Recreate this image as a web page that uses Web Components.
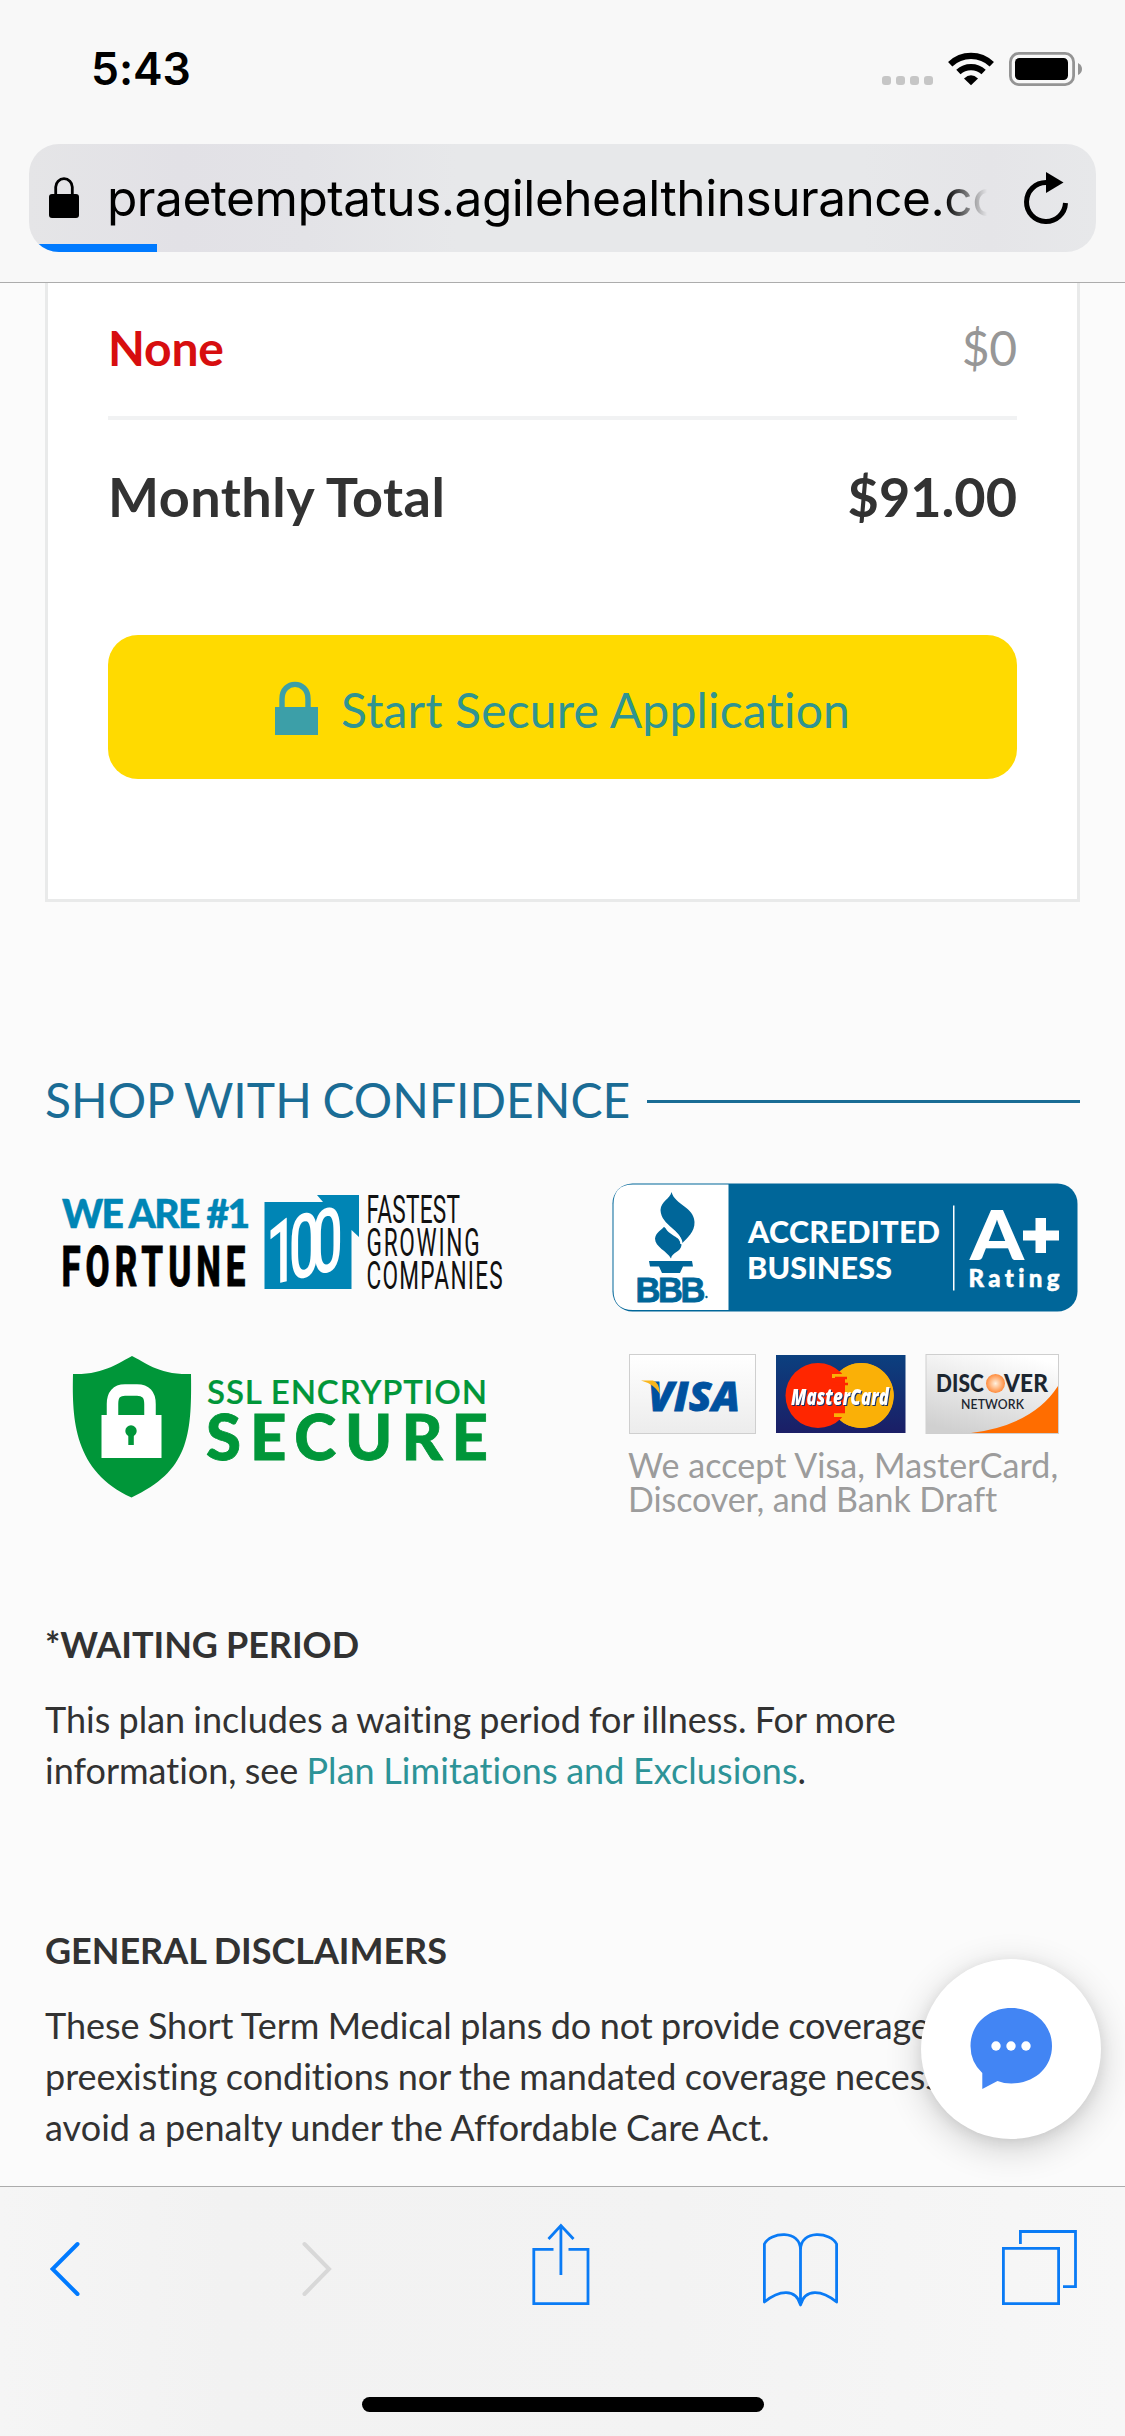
<!DOCTYPE html>
<html lang="en">
<head>
<meta charset="utf-8">
<title>Agile Health Insurance</title>
<style>
html,body{margin:0;padding:0}
body{width:1125px;height:2436px;overflow:hidden;background:#fbfbfb;color:#323232;font-family:Lato,sans-serif;font-variant-ligatures:none}
</style>
</head>
<body>
<phone-page></phone-page>
<script>
function define(name, html){
  const t=document.createElement('template');
  t.innerHTML='<style>*{box-sizing:border-box}svg{display:block}</style>'+html;
  customElements.define(name,class extends HTMLElement{
    constructor(){super();this.attachShadow({mode:'open'}).appendChild(t.content.cloneNode(true));}
  });
}

define('status-bar',`
<style>
:host{display:flex;justify-content:space-between;align-items:flex-start;height:144px;padding:0 37px 0 91px;font-family:Inter,sans-serif;color:#000}
.time{font-size:44.5px;font-weight:600;line-height:54px;margin-top:42px;letter-spacing:-.1px}
svg{margin-top:48px}
</style>
<div class="time">5:43</div>
<svg width="208" height="42" viewBox="880 48 208 42">
 <g fill="#c6c6c6"><rect x="882" y="76" width="9" height="9" rx="3"/><rect x="896" y="76" width="9" height="9" rx="3"/><rect x="910" y="76" width="9" height="9" rx="3"/><rect x="924" y="76" width="9" height="9" rx="3"/></g>
 <g fill="none" stroke="#000" stroke-width="6.2"><path d="M950.2 64.2A30 30 0 0 1 991.8 64.2"/><path d="M958.4 72A18.5 18.5 0 0 1 983.6 72"/></g>
 <path d="M964 78.5Q971 72 978 78.5L971 85.3Z"/>
 <rect x="1010.4" y="53.4" width="63.2" height="31.2" rx="8.5" fill="none" stroke="#949494" stroke-width="2.8"/>
 <rect x="1015" y="58" width="53" height="22" rx="4.5"/>
 <path d="M1078 63Q1082 65 1082 69T1078 75Z" fill="#949494"/>
</svg>`);

define('address-bar',`
<style>
:host{display:flex;align-items:center;height:108px;margin:0 29px;border-radius:30px;overflow:hidden;position:relative;background:linear-gradient(90deg,#e5e5e7 0,#e2e1e6 14%,#e3e3e7 26%,#e7e8ea 40%,#e7e8ea 78%,#e5e5e8 90%,#e7e8ea);color:#000}
.lock{margin:0 0 0 20px}
.url{width:880px;margin-left:28px;overflow:hidden;white-space:nowrap;font:400 49.6px/64px Inter,sans-serif;letter-spacing:-.5px;-webkit-mask-image:linear-gradient(90deg,#000 95.2%,transparent 100%);mask-image:linear-gradient(90deg,#000 95.2%,transparent 100%)}
.reload{margin-left:36px}
.progress{position:absolute;left:0;bottom:0;width:128px;height:8px;background:#007aff}
</style>
<svg class="lock" width="30" height="42" viewBox="49 176 30 42"><path d="M55.7 195V186a8.3 8.3 0 0 1 16.6 0V195" fill="none" stroke="#000" stroke-width="2.8"/><rect x="49" y="193" width="30" height="24" rx="3"/></svg>
<div class="url">praetemptatus.agilehealthinsurance.com</div>
<svg class="reload" width="46" height="54" viewBox="1023 171 46 54"><path d="M1065.5 203A19.5 19.5 0 1 1 1046 182.5" fill="none" stroke="#000" stroke-width="5"/><path d="M1046 172V193L1063.5 182.5Z"/></svg>
<div class="progress"></div>`);

define('browser-header',`
<style>:host{display:block;height:283px;flex:none;background:#f8f8f8;border-bottom:1px solid #acacac}</style>
<status-bar></status-bar><address-bar></address-bar>`);

define('price-row',`
<style>
:host{display:flex;justify-content:space-between;font-size:48px;line-height:60px;letter-spacing:-.2px}
.label{font-weight:700;color:#d70e0f}.price{color:#979797}
:host([total]){font-size:54px;line-height:66px;letter-spacing:0}
:host([total]) .label,:host([total]) .price{color:#323232;font-weight:700}
:host([total]) .label{letter-spacing:.48px}
</style><span class="label"><slot></slot></span><span class="price"><slot name="price"></slot></span>`);

define('secure-button',`
<style>
:host{display:flex;align-items:center;justify-content:center;height:144px;border-radius:30px;background:#ffda00;color:#2f9491;font-size:48px;line-height:60px;gap:23px}
svg{margin-top:2px}
span{margin-top:5px;letter-spacing:.18px}
</style>
<svg width="43" height="54" viewBox="0 0 43 54"><path d="M7 27V18C7 -1.5 33 -1.5 33 18V27" fill="none" stroke="#3c9fa8" stroke-width="5.4"/><rect y="26" width="43" height="28" fill="#3c9fa8"/></svg>
<span><slot></slot></span>`);

define('plan-card',`
<style>
:host{display:block;height:619px;margin:0 45px;padding:35px 60px 0;background:#fff;border:3px solid #e9eaea;border-top:0}
hr{margin:38px 0 44px;border:0;height:4px;background:#f1f2f3}
secure-button{margin-top:105px}
</style>
<price-row>None<span slot="price">$0</span></price-row>
<hr>
<price-row total>Monthly Total<span slot="price">$91.00</span></price-row>
<secure-button>Start Secure Application</secure-button>`);

define('section-title',`
<style>
:host{display:flex;align-items:center;gap:17px;margin:168px 45px 0;font-size:48px;line-height:60px;color:#1a6c95;word-spacing:-1.6px}
:host::after{content:"";flex:1;height:3px;background:#1a6c95;margin-top:3px}
</style><span><slot></slot></span>`);

define('fortune-badge',`
<style>:host{display:block}</style>
<svg width="462" height="130" viewBox="45 1183 462 130">
 <text x="62" y="1228" font-family="Lato" font-weight="900" font-size="39" fill="#0085b5" stroke="#0085b5" stroke-width=".5" textLength="188" lengthAdjust="spacing">WE ARE #1</text>
 <text transform="translate(61.5 1285.5) scale(.63 1)" font-family="Roboto" font-weight="800" font-size="55.5" fill="#000" textLength="292" lengthAdjust="spacing" stroke="#000" stroke-width=".8">FORTUNE</text>
 <path d="M264.5 1202H323L317 1195H359V1237L351.5 1230V1289H264.5Z" fill="#0085b5"/>
 <text transform="translate(266 1286) skewY(-13) scale(.62 1)" font-family="Roboto" font-weight="500" font-size="89" fill="#fff" textLength="124" lengthAdjust="spacing">100</text>
 <g fill="#111" font-family="Roboto" font-weight="400" font-size="39">
  <text transform="translate(366.5 1223) scale(.58 1)" textLength="161">FASTEST</text>
  <text transform="translate(366.5 1256) scale(.58 1)" textLength="195">GROWING</text>
  <text transform="translate(366.5 1288.5) scale(.58 1)" textLength="235">COMPANIES</text>
 </g>
</svg>`);

define('ssl-badge',`
<style>:host{display:block}</style>
<svg width="462" height="160" viewBox="45 1345 462 160">
 <path d="M132 1356C145 1362 158 1375 191 1374C192 1437 188 1471 131.5 1497.5C74 1471 72 1420 73 1374C104 1375 120 1362 132 1356Z" fill="#009639"/>
 <path d="M112.5 1417V1404Q112.5 1390 125 1390H137Q150 1390 150 1404V1417" fill="none" stroke="#fff" stroke-width="11.5"/>
 <rect x="101.5" y="1415" width="60" height="43" fill="#fff"/><circle cx="131" cy="1431" r="5.7" fill="#009639"/><rect x="128.3" y="1433" width="5.5" height="12" fill="#009639"/>
 <text x="207" y="1403.5" font-family="Lato" font-weight="600" font-size="33" fill="#009639" stroke="#009639" stroke-width=".2" textLength="280">SSL ENCRYPTION</text>
 <text x="206" y="1459.5" font-family="Lato" font-weight="900" font-size="63.5" fill="#009639" stroke="#009639" stroke-width=".8" textLength="282">SECURE</text>
</svg>`);

define('bbb-badge',`
<style>:host{display:block}</style>
<svg width="468" height="130" viewBox="612 1183 468 130">
 <rect x="612.5" y="1183.5" width="465" height="128" rx="20" fill="#006699"/>
 <path d="M728.5 1184.5V1310H633Q613.5 1310 613.5 1290V1204.5Q613.5 1184.5 633 1184.5Z" fill="#fff"/>
 <g fill="#006699">
  <path d="M671.5 1192C675 1205 694 1207 694.5 1222C695 1232 687 1238 681.5 1244C683 1230 661 1226 660.5 1210C661 1201 670 1199 671.5 1192Z"/>
  <path d="M664.5 1226C668 1236 681 1236 681.5 1245C681 1252 672 1252 671 1258.5C667 1251 655 1247 655 1238.5C656 1232 662 1230 664.5 1226Z"/>
  <path d="M663.5 1225.5Q681 1234 681.5 1244" fill="none" stroke="#fff" stroke-width="2.4"/>
  <path d="M649 1261H692L693 1266.5H683L680 1273H662L659 1266.5H650Z"/>
  <text x="635.5" y="1302" font-family="Liberation Sans" font-weight="700" font-size="34.5" stroke="#006699" stroke-width=".8" textLength="70">BBB</text><circle cx="706.5" cy="1297" r="1.2"/>
 </g>
 <g fill="#fff" font-family="Lato" font-weight="900">
  <text x="748" y="1243" font-size="30.5" textLength="192">ACCREDITED</text>
  <text x="747" y="1278.5" font-size="30.5" textLength="145">BUSINESS</text>
  <text x="970" y="1260" font-size="69" textLength="54" lengthAdjust="spacingAndGlyphs">A</text>
  <path d="M1035.5 1218H1046V1230.5H1059V1240.5H1046V1253H1035.5V1240.5H1023V1230.5H1035.5Z"/>
  <text x="968.5" y="1286.5" font-size="24" stroke="#fff" stroke-width=".5" textLength="91">Rating</text>
  <rect x="953" y="1205.5" width="1.5" height="85"/>
 </g>
</svg>`);

define('payment-badge',`
<style>:host{display:block;padding-left:16px;color:#9c9c9c;font-size:34px;line-height:34px;letter-spacing:.1px}
p{margin:14px 0 0;white-space:nowrap}.second{letter-spacing:-.08px}</style>
<svg width="432" height="80" viewBox="628 1354 432 80">
 <defs>
  <linearGradient id="v" x2="0" y2="1"><stop stop-color="#fff"/><stop offset="1" stop-color="#ececec"/></linearGradient>
  <linearGradient id="m" x2="0" y2="1"><stop stop-color="#0b407f"/><stop offset="1" stop-color="#1b1e66"/></linearGradient>
  <linearGradient id="d" x1=".7" x2=".3" y2="1"><stop stop-color="#fff"/><stop offset="1" stop-color="#d0d0d0"/></linearGradient>
  <radialGradient id="o"><stop stop-color="#fff1df"/><stop offset="1" stop-color="#ff8b3b"/></radialGradient>
 </defs>
 <rect x="629.5" y="1354.5" width="126" height="79" fill="url(#v)" stroke="#cfcfcf"/>
 <text x="648" y="1410.5" font-family="Open Sans" font-weight="800" font-style="italic" font-size="41" fill="#00519f" stroke="#00519f" stroke-width=".8" textLength="92" lengthAdjust="spacingAndGlyphs">VISA</text>
 <path d="M641 1380.5H653Q659 1382 660 1394Q654 1384 641 1380.5Z" fill="#f9b61c"/>
 <rect x="776" y="1355" width="129.5" height="78" fill="url(#m)"/>
 <circle cx="861" cy="1395.5" r="32.5" fill="#fab007"/><circle cx="818" cy="1395.5" r="32.5" fill="#ff2600"/>
 <path d="M861 1363A32.5 32.5 0 1 1 840 1420H850V1417H834V1412H845V1378H832V1374H847V1369H843A32 32 0 0 1 861 1363Z" fill="#fab007"/>
 <path d="M835 1378H847M832 1384H848M834 1412H845" stroke="#ff2600" stroke-width="2.5"/>
 <text x="791" y="1404.5" font-family="Open Sans" font-weight="800" font-style="italic" font-size="23.5" fill="#fff" textLength="98" lengthAdjust="spacingAndGlyphs" style="filter:drop-shadow(1.5px 1.5px 0 #163067)">MasterCard</text>
 <rect x="926" y="1354.5" width="132.5" height="79" fill="url(#d)" stroke="#cfcfcf"/>
 <path d="M1058 1386V1433H971Q1033 1425 1058 1386Z" fill="#ff6d00"/>
 <g font-family="Lato" fill="#1c2630"><text x="936" y="1392" font-size="25" font-weight="900" textLength="48" lengthAdjust="spacingAndGlyphs">DISC</text><text x="1004" y="1392" font-size="25" font-weight="900" textLength="44" lengthAdjust="spacingAndGlyphs">VER</text><text x="961" y="1408.5" font-size="13.5" font-weight="600" textLength="63" lengthAdjust="spacingAndGlyphs">NETWORK</text></g>
 <circle cx="995.5" cy="1383.5" r="9.5" fill="url(#o)"/>
</svg>
<p>We accept Visa, MasterCard,<br><span class="second">Discover, and Bank Draft</span></p>`);

define('trust-badges',`
<style>:host{display:grid;grid-template-columns:567px 468px;grid-template-rows:130px 190px;row-gap:32px;margin:53px 45px 0}
payment-badge{padding-top:9px}</style>
<fortune-badge></fortune-badge><bbb-badge></bbb-badge><ssl-badge></ssl-badge><payment-badge></payment-badge>`);

define('legal-note',`
<style>
:host{display:block;padding:0 45px;font-size:36px;line-height:51px;white-space:nowrap;word-spacing:-.7px;letter-spacing:-.04px}
h3{font-size:36px;line-height:51px;font-weight:700;margin:0 0 24px}
::slotted(a){color:#2d9397;text-decoration:none}
</style><h3><slot name="title"></slot></h3><div><slot></slot></div>`);

define('chat-launcher',`
<style>:host{position:absolute;left:921px;top:1959px;width:180px;height:180px;border-radius:50%;background:#fff;box-shadow:0 9px 36px rgba(0,0,0,.19),0 3px 14px rgba(0,0,0,.08)}</style>
<svg width="180" height="180" viewBox="921 1959 180 180"><path d="M1011.3 2008C1034 2008 1052 2024 1052 2046S1034 2083.5 1011.3 2083.5Q1004 2083.5 997.5 2081L982.3 2089V2073Q970.5 2062 970.5 2046C970.5 2024 988.5 2008 1011.3 2008Z" fill="#4285f4"/><g fill="#fff"><circle cx="996" cy="2046" r="4.7"/><circle cx="1011" cy="2046" r="4.7"/><circle cx="1026" cy="2046" r="4.7"/></g></svg>`);

define('browser-toolbar',`
<style>
:host{display:flex;flex-direction:column;align-items:center;flex:none;height:250px;border-top:1px solid #acacac;background:linear-gradient(90deg,#f5f5f5 0,#f2f2f2 20%,#f3f3f3 60%,#f7f7f7 100%)}
nav{display:grid;grid-template-columns:252px 229.5px 231.5px 239px 76px;width:1028px;margin:35px 0 0 3px;height:86px}
.home{width:402px;height:15px;border-radius:7.5px;background:#000;margin-top:89px}
svg{fill:none;stroke:#0a7bf5;stroke-width:2.8}
</style>
<nav>
<svg width="30" height="86" viewBox="50 2222 30 86"><path d="M77.5 2244L52.5 2269L77.5 2294" stroke="#007aff" stroke-width="4" stroke-linecap="round"/></svg>
<svg width="30" height="86" viewBox="302 2222 30 86"><path d="M304.5 2244L329 2269L304.5 2294" stroke="#d8d8d8" stroke-width="4" stroke-linecap="round"/></svg>
<svg width="58" height="86" viewBox="531.5 2222 58 86"><path d="M553 2249.4H533.3V2303.6H587.5V2249.4H568M560.4 2275V2226M548 2239L560.4 2225.5L573 2239"/></svg>
<svg width="76" height="86" viewBox="763 2222 76 86"><path d="M800.5 2305V2250C800.5 2229 770 2232 764.4 2244V2302C779 2290 796 2288 800.5 2305C805 2288 822 2290 836.6 2302V2244C831 2232 800.5 2229 800.5 2250" stroke-linejoin="round"/></svg>
<svg width="76" height="86" viewBox="1002 2222 76 86"><path d="M1003.4 2248.4H1058.6V2303.6H1003.4ZM1020.4 2244V2231.5H1075.5V2286.6H1063"/></svg>
</nav><div class="home"></div>`);

define('phone-page',`
<style>
:host{display:flex;flex-direction:column;width:1125px;height:2436px;position:relative;overflow:hidden}
main{flex:1;min-height:0;overflow:hidden}
.waiting{margin-top:84px}.general{margin-top:129px}
.first{letter-spacing:0;word-spacing:-1px}
.link{letter-spacing:.06px;word-spacing:-.7px}
.last{letter-spacing:.05px;word-spacing:-.7px}
</style>
<browser-header></browser-header>
<main>
 <plan-card></plan-card>
 <section-title>SHOP WITH CONFIDENCE</section-title>
 <trust-badges></trust-badges>
 <legal-note class="waiting"><span slot="title">*WAITING PERIOD</span><span class="first">This plan includes a waiting period for illness. For more</span><br><span class="first">information, see </span><a class="link">Plan Limitations and Exclusions</a>.</legal-note>
 <legal-note class="general"><span slot="title">GENERAL DISCLAIMERS</span>These Short Term Medical plans do not provide coverage for<br>preexisting conditions nor the mandated coverage necessary to<br><span class="last">avoid a penalty under the Affordable Care Act.</span></legal-note>
</main>
<browser-toolbar></browser-toolbar>
<chat-launcher></chat-launcher>`);
</script>
</body>
</html>
